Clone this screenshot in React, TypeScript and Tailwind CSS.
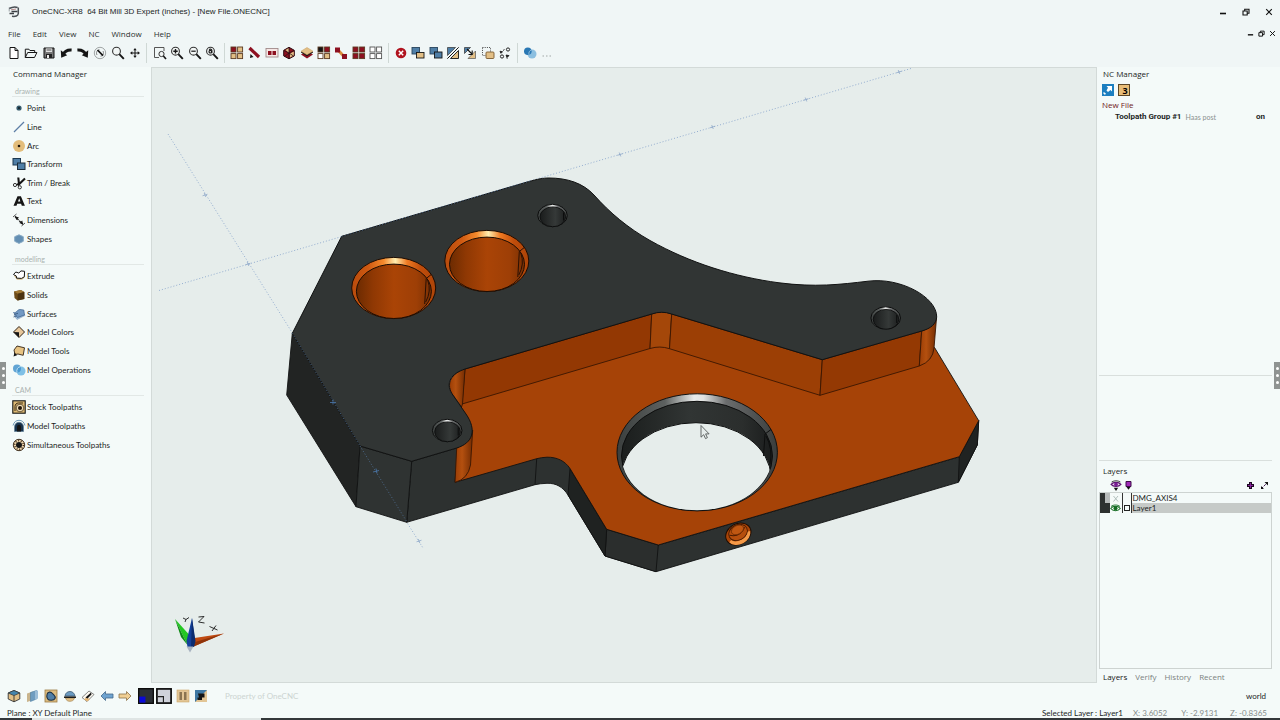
import { useState, type ReactNode } from "react";

const RED = "#8d1020";
const TAN = "#e2bf86";
const BLUE = "#4f7ea6";
const INK = "#151515";

function Icon({ children, size = 14 }: { children: ReactNode; size?: number }) {
  return (
    <svg width={size} height={size} viewBox="0 0 14 14" fill="none" aria-hidden="true" className="block shrink-0">
      {children}
    </svg>
  );
}

function Grid4({ c, stroke = "none" }: { c: string[]; stroke?: string }) {
  const pos = [[1, 1], [7.6, 1], [1, 7.6], [7.6, 7.6]];
  return (
    <>
      {pos.map(([x, y], i) => (
        <rect key={i} x={x} y={y} width="5" height="5" fill={c[i]} stroke={stroke === "none" ? "#5b3b22" : stroke} strokeWidth=".9" />
      ))}
    </>
  );
}

function Lens({ children, cx = 5.5 }: { children?: ReactNode; cx?: number }) {
  return (
    <>
      <circle cx={cx} cy="5.2" r="3.9" fill="#f2f6f5" stroke="#333" strokeWidth="1.1" />
      <path d="M8.3 8.2l4.5 4.6" stroke={INK} strokeWidth="1.9" />
      {children}
    </>
  );
}

type Tool = { name: string; icon: ReactNode };

const fileTools: Tool[] = [
  { name: "New", icon: <path d="M3 1.5h5l3 3v8H3zM8 1.5v3h3" fill="#fff" stroke={INK} strokeWidth="1" /> },
  { name: "Open", icon: <path d="M1.3 11.5V3.2h3.6l1 1.3h4.8v2M1.3 11.5l2.4-5h9.2l-2.4 5z" stroke={INK} strokeWidth="1" /> },
  {
    name: "Save",
    icon: (
      <>
        <path d="M2 2h10v10H2z" fill="#777" stroke={INK} />
        <path d="M4 2.5h6v3.4H4z" fill="#eee" />
        <path d="M4 8h6v4H4z" fill="#222" />
        <path d="M5 9h2v3H5z" fill="#eee" />
        <path d="M4.5 4h5" stroke="#444" />
      </>
    ),
  },
  {
    name: "Undo",
    icon: (
      <>
        <path d="M4 9C5.400 5.600 8 3.800 12.600 4.100" stroke={INK} strokeWidth="3" />
        <path d="M1.800 4.200l.4 7.600 6-2.600z" fill={INK} />
      </>
    ),
  },
  {
    name: "Redo",
    icon: (
      <>
        <path d="M10 9C8.600 5.600 6 3.800 1.400 4.100" stroke={INK} strokeWidth="3" />
        <path d="M12.200 4.200l-.4 7.600-6-2.600z" fill={INK} />
      </>
    ),
  },
  {
    name: "Redraw",
    icon: (
      <>
        <circle cx="7" cy="7" r="5.700" stroke="#8b9090" strokeWidth=".8" />
        <path d="M4 9c-1.200-2.500-.2-4.800 2.500-5.200M10 5c1.200 2.500.2 4.800-2.500 5.200" stroke="#777" strokeWidth=".9" />
        <path d="M4.500 4l5.500 5.600" stroke={INK} strokeWidth="1.700" />
      </>
    ),
  },
  { name: "Zoom", icon: <Lens /> },
  {
    name: "Pan",
    icon: (
      <>
        <path d="M7 4v6M4 7h6" stroke={INK} strokeWidth="1" />
        <path d="M7 2l1.700 2.300H5.300zM7 12l1.700-2.300H5.300zM2 7l2.300-1.700v3.400zM12 7L9.700 5.300v3.400z" fill={INK} />
      </>
    ),
  },
];

const zoomTools: Tool[] = [
  {
    name: "Zoom window",
    icon: (
      <>
        <path d="M6 11.500H1.500v-10h9.500V5" stroke="#444" strokeWidth=".9" />
        <circle cx="8.500" cy="8" r="2.600" fill="#f2f6f5" stroke="#333" />
        <path d="M10.400 10l2.600 3" stroke={INK} strokeWidth="1.600" />
      </>
    ),
  },
  { name: "Zoom in", icon: <Lens><path d="M5.500 3v4.400M3.300 5.200h4.400" stroke={INK} strokeWidth="1.400" /></Lens> },
  { name: "Zoom out", icon: <Lens><path d="M3.300 5.200h4.400" stroke={INK} strokeWidth="1.200" /></Lens> },
  {
    name: "Zoom all",
    icon: (
      <Lens>
        <circle cx="5.300" cy="5.700" r="1.300" stroke={INK} strokeWidth="1.100" />
        <path d="M4 3.400c1.500-.7 2.900-.2 2.900 1.200v2.700" stroke={INK} strokeWidth="1.100" />
      </Lens>
    ),
  },
];

const layerTools: Tool[] = [
  { name: "Select", icon: <Grid4 c={[RED, TAN, TAN, TAN]} /> },
  {
    name: "Select chain",
    icon: (
      <>
        <path d="M2.500 2l9.500 9" stroke={RED} strokeWidth="3.200" />
        <path d="M3 12l.5-4 3 3z" fill={INK} />
      </>
    ),
  },
  {
    name: "Select window",
    icon: (
      <>
        <rect x="1" y="2.500" width="12" height="8.500" fill="#f6e6e4" stroke="#a08a8a" strokeWidth=".9" />
        <rect x="3" y="5" width="3.500" height="4" fill={RED} />
        <rect x="7.500" y="5" width="3.500" height="4" fill={RED} />
      </>
    ),
  },
  {
    name: "Select faces",
    icon: (
      <>
        <path d="M7 1.300l5.300 3v5.600L7 12.800 1.700 9.900V4.300z" fill={RED} stroke="#2c0c10" />
        <path d="M7 2l-3.500 2L7 7z" fill={TAN} />
        <path d="M8 7.500l3.800-2v4L8 11.500z" fill={TAN} />
        <path d="M7 1.500v11M2 4.500l5 2.500M12 4.500L7 7M7 7l-4.500 3.500M7 7l4.500 3" stroke="#221013" strokeWidth=".8" />
      </>
    ),
  },
  {
    name: "Select layer",
    icon: (
      <>
        <path d="M7 5l6 3.500-6 4-6-4z" fill={RED} />
        <path d="M1 6.500l6 3.800 6-3.800v-1H1z" fill={INK} />
        <path d="M7 1.500l6 3.700-6 3.600-6-3.600z" fill={TAN} stroke="#c79a5c" strokeWidth=".5" />
      </>
    ),
  },
  { name: "Select color", icon: <Grid4 c={[INK, RED, "#fff", TAN]} /> },
  {
    name: "Select connected",
    icon: (
      <>
        <path d="M4 4l6 6.500" stroke="#d98b3c" strokeWidth="3" />
        <rect x="1" y="1.500" width="5" height="5" fill={RED} />
        <rect x="8" y="8" width="5" height="5" fill={RED} />
      </>
    ),
  },
  { name: "Select all", icon: <Grid4 c={[RED, RED, RED, RED]} /> },
  { name: "Select none", icon: <Grid4 c={["#fff", "#fff", "#fff", "#fff"]} stroke="#555" /> },
];

const editTools: Tool[] = [
  {
    name: "Delete",
    icon: (
      <>
        <circle cx="7" cy="7" r="5.300" fill="#b0131f" />
        <path d="M4.800 4.800l4.400 4.400M9.200 4.800L4.800 9.200" stroke="#fff" strokeWidth="1.500" />
      </>
    ),
  },
  {
    name: "Move",
    icon: (
      <>
        <rect x="1" y="1.500" width="7.500" height="6.500" fill={BLUE} stroke="#28445c" strokeWidth=".9" />
        <rect x="5.500" y="6.500" width="7.500" height="5.500" fill={TAN} stroke={INK} strokeWidth=".9" />
      </>
    ),
  },
  {
    name: "Copy",
    icon: (
      <>
        <rect x="1" y="1.500" width="7.500" height="6.500" fill={BLUE} stroke="#28445c" strokeWidth=".9" />
        <rect x="5.500" y="6" width="7.500" height="6" fill={BLUE} stroke={INK} strokeWidth=".9" />
      </>
    ),
  },
  {
    name: "Mirror",
    icon: (
      <>
        <path d="M1.500 1.500h8l-8 8z" fill={BLUE} stroke="#333" strokeWidth=".7" />
        <path d="M12.500 4.500v8h-8z" fill={TAN} stroke={INK} strokeWidth=".9" />
        <path d="M12.700 1.300L1.300 12.700" stroke="#f4f8f7" strokeWidth="2.400" />
        <path d="M12.700 1.300L1.300 12.700" stroke={INK} strokeWidth="1" />
      </>
    ),
  },
  {
    name: "Rotate",
    icon: (
      <>
        <path d="M1.500 1.500h6l-6 6z" fill={BLUE} stroke="#333" strokeWidth=".7" />
        <path d="M12.500 5v7.500H5z" fill={TAN} stroke="#555" strokeWidth=".7" />
        <path d="M4 3l5 5M5.500 8.500h3.700V4.500" stroke={INK} strokeWidth="1.100" />
      </>
    ),
  },
  {
    name: "Scale",
    icon: (
      <>
        <path d="M1.500 1.500h8v8h-8z" stroke="#333" strokeWidth=".9" strokeDasharray="1 1.200" />
        <rect x="5" y="6" width="8" height="6.500" rx="1" fill={TAN} stroke="#7a5a30" strokeWidth=".9" />
      </>
    ),
  },
  {
    name: "Array",
    icon: (
      <>
        <circle cx="10" cy="3.500" r="1.600" stroke="#222" />
        <circle cx="4" cy="10.500" r="1.600" stroke="#222" />
        <path d="M2 5.200l2.600.6-1.800 1.500zM8 9l3 .6-2 2z" fill={INK} stroke={INK} strokeWidth=".8" />
        <path d="M5 4.500l1.500-1M8.500 12l1 .5" stroke="#333" />
      </>
    ),
  },
];

const modelTools: Tool[] = [
  {
    name: "Boolean",
    icon: (
      <>
        <circle cx="9" cy="8" r="4.500" fill="#8cbfe0" />
        <circle cx="4.800" cy="5.200" r="3.800" fill="#2a78b4" />
        <path d="M6 8.800a4.400 4.400 0 012.600-5" stroke="#cfe6f4" strokeWidth=".6" />
      </>
    ),
  },
  {
    name: "More",
    icon: <path d="M2.500 10h1.500M6 10h1.500M9.500 10H11" stroke="#a0a6a5" strokeWidth="1.200" />,
  },
];

const drawing: Tool[] = [
  {
    name: "Point",
    icon: (
      <>
        <circle cx="7" cy="7" r="2.600" fill="#34596b" />
        <circle cx="7" cy="7" r="1" fill="#101c22" />
      </>
    ),
  },
  { name: "Line", icon: <path d="M2 12L12 2" stroke="#5d7ea6" strokeWidth="1.300" /> },
  {
    name: "Arc",
    icon: (
      <>
        <circle cx="7" cy="7" r="6" fill="#e3bd7b" />
        <circle cx="7" cy="7" r="1.300" fill="#1b130a" />
      </>
    ),
  },
  {
    name: "Transform",
    icon: (
      <>
        <rect x="1" y="1.500" width="7.500" height="6.500" fill={BLUE} stroke="#1c3850" />
        <rect x="5.500" y="6" width="7.500" height="6.500" fill={BLUE} stroke="#1c2c3a" />
      </>
    ),
  },
  {
    name: "Trim / Break",
    icon: (
      <>
        <path d="M6.300 1.500l.7 6.800L13 2.500" stroke={INK} strokeWidth="2.100" />
        <path d="M7 7.500L4.500 9" stroke={INK} strokeWidth="1.500" />
        <circle cx="3" cy="9" r="1.600" stroke="#333" />
        <circle cx="7.800" cy="11.300" r="1.600" stroke="#333" />
      </>
    ),
  },
  { name: "Text", icon: <path d="M1.500 11.800L5.500 2.200h3.400l4 9.600H9.800l-.7-2H5.200l-.7 2zM6 7.600h2.400L7.200 4.300z" fill={INK} fillRule="evenodd" /> },
  {
    name: "Dimensions",
    icon: (
      <>
        <path d="M1 4l3.500-3M9.500 13l3.500-3" stroke="#444" strokeWidth=".9" />
        <path d="M3 3.500l8 8" stroke={INK} strokeDasharray="2 1" strokeWidth="1.200" />
        <path d="M3 3.300l4 1.200-2.700 2.500zM11.200 11.500l-1-4L7.300 10z" fill={INK} />
      </>
    ),
  },
  { name: "Shapes", icon: <path d="M7 2.800l4.300 1.900v4.600L7 11.400 2.700 9.300V4.700z" fill="#638fb3" stroke="#86a9c4" /> },
];

const modelling: Tool[] = [
  {
    name: "Extrude",
    icon: (
      <>
        <path d="M2 6.800l2.500-2.700 2.700 1L9.500 3l3 .3v5.500l-2.500 2H5z" fill="#d8c08a" />
        <path d="M1.500 5.500L3.800 3l3 1L9 1.900l3.600.4-.3 5.500-2.800 1.600-5-.3L4.300 7z" fill="#fff" stroke={INK} strokeWidth="1" />
      </>
    ),
  },
  {
    name: "Solids",
    icon: (
      <>
        <path d="M2 3.500L8.800 2 12.300 4v7L5.500 12.500 2.500 10z" fill="#6d4b18" />
        <path d="M2 3.500L8.800 2 12.300 4 5.800 5.800z" fill="#a07834" />
        <path d="M5.800 5.800L12.300 4v7l-6.800 1.500z" fill="#4a3210" />
      </>
    ),
  },
  {
    name: "Surfaces",
    icon: (
      <>
        <path d="M2 8.500l8.500-3 2.500 3-8 4z" fill="#9fbddb" stroke="#7592b4" strokeWidth=".5" />
        <path d="M1.500 5.500c3 1 3.500-3 6.500-3l3.800.5.700 5-7 2.500z" fill="#7299c4" stroke="#3d628c" strokeWidth=".7" />
        <path d="M1.500 10l3-1M2 7.500l4-1.200" stroke="#335378" strokeWidth=".8" />
      </>
    ),
  },
  {
    name: "Model Colors",
    icon: (
      <>
        <path d="M7 1.500L12.500 7 7 12.500 1.500 7z" fill="#e7c79b" stroke="#332415" />
        <path d="M1.500 7L7 7.200v5.300z" fill={INK} />
      </>
    ),
  },
  {
    name: "Model Tools",
    icon: (
      <>
        <path d="M5 2l7.500 1.800-1.300 7.500L6 10l-3 .5L2 6z" fill="#e7c383" stroke="#332415" strokeWidth=".9" />
        <path d="M1.500 12.500l1-4 2.500 2.700z" fill={INK} />
      </>
    ),
  },
  {
    name: "Model Operations",
    icon: (
      <>
        <circle cx="9" cy="8" r="4.500" fill="#7fc0e6" />
        <circle cx="5" cy="5.500" r="4" fill="#3c8fca" fillOpacity=".8" />
        <path d="M5 9.300a4.300 4.300 0 013.700-5.700" stroke="#d8eefa" strokeWidth=".8" />
      </>
    ),
  },
];

const cam: Tool[] = [
  {
    name: "Stock Toolpaths",
    icon: (
      <>
        <rect x=".8" y=".8" width="12.400" height="12.400" fill="#dcb873" stroke={INK} strokeWidth="1.100" />
        <path d="M3 11V6.500C3 4.500 4.500 3 6.500 3H11" stroke="#3a2a14" />
        <circle cx="8" cy="8" r="3.800" fill="#f0dcb4" stroke="#3a2a14" strokeWidth=".7" />
        <circle cx="8" cy="8" r="2" fill="#201308" />
      </>
    ),
  },
  {
    name: "Model Toolpaths",
    icon: (
      <>
        <path d="M1 6.500C2 3 4 1.300 7 1.300S12 3 13 6.500" stroke="#6f9ab8" />
        <path d="M2.500 12.500V8C2.500 5 4.500 3.300 7 3.300S11.500 5 11.500 8v4.500z" fill="#17324d" stroke="#5f8097" strokeWidth=".7" />
        <path d="M5 12.500V8c0-3 4-3 4 0v4.500z" fill={INK} />
      </>
    ),
  },
  {
    name: "Simultaneous Toolpaths",
    icon: (
      <>
        <circle cx="7" cy="7" r="5.700" fill="#ecd6ae" stroke="#2c1c0c" strokeWidth=".9" />
        <circle cx="7" cy="7" r="4.300" stroke="#4a321a" strokeDasharray="1 1.700" strokeWidth="1.600" />
        <circle cx="7" cy="7" r="3" fill={INK} />
      </>
    ),
  },
];

const viewTools: Tool[] = [
  {
    name: "Isometric",
    icon: (
      <>
        <path d="M7 1.500L12.800 4v6L7 12.800 1.200 10V4z" fill={TAN} stroke="#333" strokeWidth=".9" />
        <path d="M7 1.500L12.800 4 7 6.600 1.200 4z" fill="#4685ad" stroke="#333" strokeWidth=".7" />
        <path d="M7 6.600v6.200" stroke="#333" strokeWidth=".9" />
      </>
    ),
  },
  {
    name: "Front view",
    icon: (
      <>
        <path d="M1 4.500l6-2V11l-6 2z" fill="#c9b48d" />
        <path d="M4.500 3.500l6-2v8.500l-6 2.500z" fill="#6f9dc0" stroke="#4e7ea3" strokeWidth=".6" />
        <path d="M9 2v9l3-1.500V1.500z" fill="#9bbdd7" />
      </>
    ),
  },
  {
    name: "Shaded",
    icon: (
      <>
        <rect x="1" y="1" width="12" height="12" fill="#dcbc80" stroke="#9d7c46" strokeWidth=".8" />
        <path d="M3 5.500C3.800 2.500 7 2.500 8.500 4.500S12 7 11 9.500s-6.500 2-7.300.5S2.500 7 3 5.500z" fill={BLUE} stroke="#1f3244" strokeWidth="1.100" />
      </>
    ),
  },
  {
    name: "Section",
    icon: (
      <>
        <path d="M2.500 9h9c-.5 2.300-2.500 3.300-4.500 3.300S3 11.500 2.500 9z" fill={TAN} stroke="#a58653" strokeWidth=".7" />
        <path d="M2 7c.3-3 2.500-4.500 5-4.500S11.500 4.300 12 7z" fill="#6c9bc2" stroke="#3c5a74" strokeWidth=".8" />
        <path d="M1 8.200h12" stroke={INK} strokeWidth="1.500" />
      </>
    ),
  },
  {
    name: "Edges",
    icon: (
      <>
        <path d="M1 8.500l7-6.500 5 3.500-7 7z" fill="#fbf8f0" stroke="#555" strokeWidth=".7" />
        <path d="M3 10.500l2-2 4 1.500-2.500 2.500z" fill="#e3b677" />
        <path d="M4.500 8.500l5.500-5 .5 2-4 4z" fill={INK} />
      </>
    ),
  },
  { name: "Previous view", icon: <path d="M1 7l4.500-4.500V5h7.500v4H5.500v2.500z" fill="#6ea3d0" stroke="#44688a" strokeWidth=".8" /> },
  { name: "Next view", icon: <path d="M13 7L8.500 2.500V5H1v4h7.500v2.500z" fill="#f0cf94" stroke="#8b714a" strokeWidth=".8" /> },
];

const planeTools: Tool[] = [
  {
    name: "Dark plane",
    icon: (
      <>
        <rect x=".6" y=".6" width="12.800" height="12.800" fill="#2c3036" stroke="#0c0c0c" strokeWidth="1.200" />
        <rect x="1.200" y="7.500" width="5.300" height="5.300" fill="#0a08d8" />
      </>
    ),
  },
  {
    name: "Light plane",
    icon: (
      <>
        <rect x=".8" y=".8" width="12.400" height="12.400" fill="#cfd2da" stroke="#0c0c0c" strokeWidth="1.500" />
        <path d="M1.500 7.500h5v5.500" stroke="#222" />
      </>
    ),
  },
];

const panelTools: Tool[] = [
  {
    name: "Panels",
    icon: (
      <>
        <rect x="1" y="1" width="12" height="12" fill="#e2c595" stroke="#cda769" strokeWidth=".6" />
        <rect x="3.500" y="3" width="2.500" height="8" fill="#8a7451" />
        <rect x="8" y="3" width="2.500" height="8" fill="#8a7451" />
      </>
    ),
  },
  {
    name: "Swap",
    icon: (
      <>
        <rect x="1" y="1" width="12" height="12" fill="#e2c595" />
        <path d="M1 1h12L1 13z" fill="#3e78a4" />
        <path d="M4 4.500h6.500v4H8V11H3.500V8.500H5z" fill={INK} />
      </>
    ),
  },
];

function ToolGroup({ tools, className, size = 14 }: { tools: Tool[]; className: string; size?: number }) {
  return (
    <div className={"flex items-center justify-between " + className}>
      {tools.map((t) => (
        <button key={t.name} type="button" aria-label={t.name} className="hover:bg-sky-100">
          <Icon size={size}>{t.icon}</Icon>
        </button>
      ))}
    </div>
  );
}

function CommandList({ title, tools, className }: { title: string; tools: Tool[]; className: string }) {
  return (
    <section>
      <h3 className="mb-[2px] ml-3 mr-[7px] flex h-[17px] items-center border-b border-[#e2e8e6] pl-[3px] pt-[6px] text-[7px] leading-[8px] text-[#aab2b0]">
        {title}
      </h3>
      <ul className={"ml-3 flex flex-col justify-between " + className}>
        {tools.map((t) => (
          <li key={t.name} className="flex flex-1 items-center">
            <button type="button" className="flex items-center gap-[1px] leading-[12px] text-[#1c1f1e]">
              <Icon>{t.icon}</Icon>
              {t.name}
            </button>
          </li>
        ))}
      </ul>
    </section>
  );
}

function Handle({ side }: { side: "left" | "right" }) {
  return (
    <button
      type="button"
      aria-label={side === "left" ? "Collapse commands" : "Collapse manager"}
      className={
        "absolute top-[295px] flex h-[27px] w-[6px] flex-col items-center justify-center gap-1 bg-[#8f9392] " +
        (side === "left" ? "left-0" : "right-0")
      }
    >
      <span className="size-[3px] rounded-full bg-white" />
      <span className="size-[3px] rounded-full bg-white" />
      <span className="size-[3px] rounded-full bg-white" />
    </button>
  );
}

function Tick({ x, y }: { x: number; y: number }) {
  return <path d={`M${x - 2.5} ${y + 0.8}l5-1.600M${x - 0.8} ${y - 2}l1.600 4`} stroke="#86a2c6" strokeWidth=".7" />;
}

function SmallBore({ x, y }: { x: number; y: number }) {
  return (
    <g>
      <ellipse cx={x} cy={y} rx="14.800" ry="11.200" fill="url(#steelRim)" stroke="#0c0d0d" strokeWidth="1" />
      <ellipse cx={x + 0.3} cy={y + 1.3} rx="12.800" ry="9.900" fill="url(#darkBore)" stroke="#0c0d0d" strokeWidth=".9" />
      <path d={`M${x + 11} ${y - 3}v8`} stroke="#0c0d0d" strokeWidth="1" />
    </g>
  );
}

function OrangeBore({ x, y }: { x: number; y: number }) {
  return (
    <g>
      <ellipse cx={x} cy={y} rx="42" ry="30.600" fill="url(#orangeRim)" stroke="#1d0c02" strokeWidth="1" />
      <ellipse cx={x + 0.2} cy={y + 3.3} rx="37.500" ry="27.200" fill="url(#orangeBore)" stroke="#1d0c02" strokeWidth="1" />
      <path d={`M${x + 32.5} ${y - 9.5}l-1.500 25.500M${x + 32.5} ${y - 9.5}l5-4M${x + 34} ${y - 8}q4 11-2 22`} stroke="#2a1003" strokeWidth="1" fill="none" />
    </g>
  );
}

function Viewport() {
  return (
    <svg viewBox="152 68 944 614" className="block h-full w-full" role="img" aria-label="Machined plate model">
      <defs>
        <linearGradient id="orangeRim">
          <stop offset="0" stopColor="#b84b0c" />
          <stop offset=".2" stopColor="#cf5a12" />
          <stop offset=".38" stopColor="#f58a2c" />
          <stop offset=".52" stopColor="#ffeeb0" />
          <stop offset=".66" stopColor="#ef7a22" />
          <stop offset=".82" stopColor="#c04d0b" />
          <stop offset="1" stopColor="#ad4408" />
        </linearGradient>
        <linearGradient id="orangeBore">
          <stop offset="0" stopColor="#6c2b01" />
          <stop offset=".22" stopColor="#8f3803" />
          <stop offset=".5" stopColor="#aa4406" />
          <stop offset=".8" stopColor="#9e3f06" />
          <stop offset="1" stopColor="#7a3003" />
        </linearGradient>
        <linearGradient id="steelRim">
          <stop offset="0" stopColor="#3b3f3e" />
          <stop offset=".3" stopColor="#5d6160" />
          <stop offset=".48" stopColor="#e8eae9" />
          <stop offset=".54" stopColor="#e0e2e1" />
          <stop offset=".68" stopColor="#6b6d6e" />
          <stop offset="1" stopColor="#3a3d3c" />
        </linearGradient>
        <linearGradient id="darkBore">
          <stop offset="0" stopColor="#1a1c1c" />
          <stop offset=".6" stopColor="#353938" />
          <stop offset="1" stopColor="#1d1f1f" />
        </linearGradient>
        <linearGradient id="bigWall">
          <stop offset="0" stopColor="#1b1e1d" />
          <stop offset=".45" stopColor="#313534" />
          <stop offset=".8" stopColor="#2b2e2d" />
          <stop offset="1" stopColor="#1b1d1d" />
        </linearGradient>
        <linearGradient id="orangeFillet">
          <stop offset="0" stopColor="#9b3d05" />
          <stop offset=".4" stopColor="#b4500f" />
          <stop offset="1" stopColor="#732c02" />
        </linearGradient>
        <clipPath id="bigInner">
          <ellipse cx="697" cy="456" rx="75.300" ry="54.300" />
        </clipPath>
      </defs>

      <g stroke="#8aa6cc" strokeWidth=".9" strokeDasharray="1 2">
        <path d="M159 290.500L911 68.500" />
        <path d="M168 134L293 334" />
        <path d="M406 521L423 548" />
      </g>
      {[[205, 195], [248, 264], [620, 154.5], [712.5, 127], [806, 99.5], [899, 72], [419, 541]].map(([x, y]) => (
        <Tick key={x} x={x} y={y} />
      ))}

      <g stroke="#111212" strokeWidth=".9" strokeLinejoin="round">
        <path
          d="M411.700 461.300L456.700 448 472 430 620 440 606.700 529.300 658.300 545 959.300 456.700 978.700 420.700 977.300 445 958.300 482.300 656 571.700 605 556 568 495C563 487 556 483 547 483.300Q540 483.500 535 484.700L406.700 522.300z"
          fill="#2d3130"
        />
        <path d="M959.300 456.700L978.700 420.700 977.300 445 958.300 482.300z" fill="#202322" />
        <path d="M606.700 529.300L658.300 545 656 571.700 605 556z" fill="#2b2e2d" />
        <path d="M570 468.500L606.700 529.300 605 556 568 495z" fill="#1f2221" />
        <path
          d="M461 404L465 369 661 312 822 350 934.500 347.500 978.700 420.700 959.300 456.700 658.300 545 606.700 529.300 570 468.500C565 461 557 457 547 457.200Q541 457.500 536.700 458.700L455 482.300z"
          fill="#a64307"
        />
        <path d="M536.700 458.700L535 484.700" />
        <path d="M292.300 333.300L360 446 356 506.700 286.700 395z" fill="#222423" />
        <path d="M360 446L411.700 461.300 406.700 522.300 356 506.700z" fill="#2f3332" />
      </g>

      <g stroke="#3a1602" strokeWidth=".9" strokeLinejoin="round">
        <path d="M465 369L651.700 314 650 348.500 462 404z" fill="#933803" />
        <path d="M465 369C452 373 446 383 451.700 393.300L461.500 407 462.500 404z" fill="url(#orangeFillet)" />
        <path d="M651.700 314Q661.700 310 671.700 314L669.500 348.700Q660 345.500 650 348.500z" fill="#a44709" />
        <path d="M671.700 314L822.300 359.700 820 395.300 669.500 348.700z" fill="#9c3f05" />
        <path d="M822.300 359.700L921.700 331 919.300 366 820 395.300z" fill="#943903" />
        <path d="M921.700 331Q932 328 936.500 318L934 348Q933 361 919.300 366z" fill="url(#orangeFillet)" />
        <path d="M456.700 448Q469 443 472.700 430L470.500 465Q468 479 455 482.300z" fill="url(#orangeFillet)" />
      </g>

      <path
        d="M341.700 236.300L528.300 181.700C538 179 543 178 549 178C567 178 583 183 594 195C610 213 628 228 650 240.500C690 263 735 277 779 282.800C815 287.500 840 284.500 868 281.200C900 277 937 297 936.700 317C936 324 931 328.500 921.700 331L822.300 359.700 671.700 314Q661.700 310.500 651.700 314L465 369C451 373.500 445.500 383 451.700 393.300L466 414C477 430 473 443 456.700 448L411.700 461.300 360 446 292.300 333.300z"
        fill="#313534"
        stroke="#111212"
        strokeWidth="1"
      />
      <g stroke="#52739c" strokeWidth=".8" strokeDasharray="1 2">
        <path d="M292.300 333.300L360 446" />
        <path d="M360 446L407 522" />
        <path d="M341.700 236.300L530 181" />
      </g>
      <path d="M330 402.500h6M333 399.500v5M373 472l6-1.500M376 468.500l1 5" stroke="#4b78ad" strokeWidth=".8" />

      <OrangeBore x={393.7} y={288} />
      <OrangeBore x={486.8} y={261} />
      <SmallBore x={552.5} y={215.5} />
      <SmallBore x={447.2} y={430.5} />
      <SmallBore x={885.7} y={318} />

      <ellipse cx="697.200" cy="452.300" rx="80.200" ry="58.500" fill="url(#steelRim)" stroke="#111212" strokeWidth="1" />
      <ellipse cx="697" cy="456" rx="75.500" ry="54.700" fill="url(#bigWall)" stroke="#0d0e0e" strokeWidth="1" />
      <ellipse cx="696" cy="477.500" rx="75" ry="54.800" fill="#e6edeb" stroke="#0d0e0e" strokeWidth="1" clipPath="url(#bigInner)" />
      <path d="M765 434l-1.500 22M765 434l6-4.500M766 436q7 13 4 28" stroke="#0d0e0e" strokeWidth="1" fill="none" />

      <g transform="rotate(-28 738.300 534)">
        <ellipse cx="738.300" cy="534" rx="13.200" ry="10.300" fill="#a84407" stroke="#1d0c02" />
        <path d="M726.500 537a12 9 0 0023.600 0l-3-1a9.500 6.500 0 01-18 0z" fill="#f59a48" />
        <ellipse cx="738.800" cy="532.500" rx="9.800" ry="7.600" fill="#b64e0d" stroke="#4a1b02" strokeWidth=".9" />
        <path d="M730 531q8 7 17 0" stroke="#4a1b02" fill="none" />
        <ellipse cx="739.500" cy="530" rx="6.500" ry="4.300" fill="#c05712" stroke="#6a2903" strokeWidth=".7" />
      </g>

      <path d="M701 425.500v11.700l2.700-2.500 1.800 3.900 1.900-.9-1.800-3.800h3.500z" fill="#e6edeb" stroke="#555a59" strokeWidth=".9" />

      <path d="M175 619L188.500 634 187.500 645z" fill="#23c822" />
      <path d="M175 619L181 637 187.500 645z" fill="#0d8a15" />
      <path d="M224 633.500L194.500 638 192.500 647z" fill="#c04a12" />
      <path d="M224 633.500L195 642 192.500 647z" fill="#8f340a" />
      <path d="M192 618L195 641 192.500 647H187.500L186.500 641z" fill="#14409a" />
      <path d="M192 618L191 647H194L195.500 641z" fill="#0c2c70" />
      <path d="M186.500 646.500h7l-3.500 6z" fill="#a9b4c2" />
      <g fill="none" stroke="#1a1a1a" strokeWidth=".9">
        <path d="M183 618l3 1.500 3-2M186 619.500l-1 2.500" />
        <path d="M198.500 617l5.500-.5-5.500 5.500 6 1" />
        <path d="M209.500 626.500l8 3.500M216 625.500l-4 5.500" />
      </g>
    </svg>
  );
}

function WindowButtons({ className, size }: { className: string; size: number }) {
  return (
    <div className={"flex items-center " + className}>
      <button type="button" aria-label="Minimize">
        <svg width={size} height={size} viewBox="0 0 8 8" className="block"><path d="M1 5.500h6" stroke="#111" strokeWidth="1.600" /></svg>
      </button>
      <button type="button" aria-label="Restore">
        <svg width={size} height={size} viewBox="0 0 8 8" fill="none" className="block"><path d="M1 3h4.200v4H1zM2.700 3V1.300H7v4H5.200" stroke="#111" strokeWidth="1.100" /></svg>
      </button>
      <button type="button" aria-label="Close">
        <svg width={size} height={size} viewBox="0 0 8 8" className="block"><path d="M1.200 1.200l5.600 5.600M6.800 1.200L1.200 6.800" stroke="#111" strokeWidth="1.100" /></svg>
      </button>
    </div>
  );
}

function Eye({ color }: { color: string }) {
  return (
    <svg width="11" height="9" viewBox="0 0 11 9" fill="none" className="block">
      <path d="M.8 4.500C3 1.500 8 1.500 10.200 4.500 8 7.500 3 7.500.8 4.500z" fill="#fff" stroke={color} strokeWidth="1.100" />
      <circle cx="5.500" cy="4.300" r="2" fill={color} />
      <path d="M1 2.500C3.500.5 7.500.5 10 2.500" stroke={color} strokeWidth=".9" />
    </svg>
  );
}

function LayersPanel() {
  const [selected, setSelected] = useState("Layer1");
  const layers = [
    { name: "DMG_AXIS4", shown: false },
    { name: "Layer1", shown: true },
  ];
  return (
    <section className="mr-2 flex min-h-0 flex-[222_1_0%] flex-col border-t border-[#d9dfdd]">
      <h2 className="mt-1 pl-1 leading-[11px]">Layers</h2>
      <div className="flex h-4 items-center gap-[3px] pl-[11px] pr-[3px] pt-[2px]">
        <button type="button" aria-label="Show all layers">
          <svg width="12" height="11" viewBox="0 0 11 10" fill="none" className="block">
            <path d="M1 4C3 1.500 8 1.500 10 4 8 6.500 3 6.500 1 4z" fill="#e8d6ee" stroke="#5d1470" strokeWidth="1.100" />
            <circle cx="5.500" cy="3.900" r="1.700" fill="#7a1c96" />
            <path d="M1.500 1.800C4 .3 7 .3 9.500 1.800" stroke="#222" strokeWidth=".8" />
            <path d="M3.500 7h4l-2 3z" fill="#111" />
          </svg>
        </button>
        <button type="button" aria-label="Lock layers">
          <svg width="7" height="10" viewBox="0 0 7 10" className="block">
            <path d="M1 1.500h5v5H1z" fill="#a02ab8" stroke="#3c0d48" />
            <path d="M1.500 7h4l-2 2.700z" fill="#111" />
          </svg>
        </button>
        <span className="flex-1" />
        <button type="button" aria-label="Add layer" className="mr-[2px]">
          <svg width="9" height="9" viewBox="0 0 9 9" className="block">
            <path d="M3 1h3v2h2v3H6v2H3V6H1V3h2z" fill="#1d0a22" />
            <path d="M4.500 2v5M2 4.500h5" stroke="#8e24a6" strokeWidth=".9" />
          </svg>
        </button>
        <button type="button" aria-label="Expand layers">
          <svg width="9" height="9" viewBox="0 0 9 9" className="block">
            <path d="M1.500 7.500l6-6" stroke="#4a1456" strokeWidth="1" strokeDasharray="2.500 1" />
            <path d="M4.500 1H8v3.500zM1 5v3h3z" fill="#111" />
          </svg>
        </button>
      </div>
      <div className="mb-[1px] min-h-0 flex-1 border border-[#cdd3d1]">
        <table className="w-full border-collapse">
          <tbody>
            {layers.map((l) => (
              <tr
                key={l.name}
                onClick={() => setSelected(l.name)}
                className={"h-[10px] " + (l.name === selected ? "bg-[#c6cac8]" : "")}
              >
                <td className="w-[5px] bg-[#2d3130] p-0" />
                <td className={"w-[5px] p-0 " + (l.shown ? "bg-[#2d3130]" : "bg-[#b6baba]")} />
                <td className="w-3 border-r border-[#333] bg-[#f5faf9] p-0">
                  {l.shown ? (
                    <Eye color="#136b22" />
                  ) : (
                    <svg width="11" height="9" viewBox="0 0 11 9" className="block"><path d="M3.500 2l4.500 5.500M8 2L3.500 7.500" stroke="#a9b9b5" strokeWidth=".9" /></svg>
                  )}
                </td>
                <td className="w-[9px] border-r border-[#333] bg-[#f5faf9] p-0">
                  {l.shown && <span className="mx-auto block size-[6px] border border-[#222]" />}
                </td>
                <td className="p-0 pl-[1px] font-['Lato','Open_Sans',sans-serif] leading-[10px]">
                  <button type="button" className="block leading-[10px]">{l.name}</button>
                </td>
              </tr>
            ))}
          </tbody>
        </table>
      </div>
      <nav className="flex h-[13px] items-center gap-2 pl-1 text-[#7b8280]">
        {["Layers", "Verify", "History", "Recent"].map((t, i) => (
          <button key={t} type="button" className={i === 0 ? "text-[#141616]" : ""}>{t}</button>
        ))}
      </nav>
    </section>
  );
}

export default function App() {
  return (
    <div className="flex h-screen flex-col overflow-hidden bg-[#f4faf9] font-['Open_Sans','Noto_Sans',sans-serif] text-[8px] text-[#1c1f1e]">
      <header className="bg-[#f0f6f6]">
        <div className="flex h-6 items-center pl-2 pr-[7px]">
          <svg width="12" height="12" viewBox="0 0 12 12" fill="none" aria-hidden="true">
            <path d="M1 2.500C4 1 8 .8 9.500 1.500M10.300 1.500v6C10 10 7.500 10.800 4 10.300" stroke="#4a4f55" strokeWidth="1.500" />
            <path d="M3.500 5.500h6M1.500 7.500h4.500" stroke="#3b3f44" strokeWidth="1.500" />
            <path d="M1.200 2.500v3" stroke="#9aa0a4" />
            <path d="M3 3.800l5-.8" stroke="#b58a8a" />
          </svg>
          <h1 className="ml-3 whitespace-pre font-['Liberation_Sans',sans-serif]">OneCNC-XR8  64 Bit Mill 3D Expert (inches) - [New File.ONECNC]</h1>
          <WindowButtons className="ml-auto gap-[15px]" size={8} />
        </div>
        <div className="flex h-[19px] items-center pl-2 pr-1">
          <nav className="flex items-center gap-3 text-[#2c3130]">
            {["File", "Edit", "View", "NC", "Window", "Help"].map((m) => (
              <button key={m} type="button">{m}</button>
            ))}
          </nav>
          <WindowButtons className="ml-auto gap-1" size={7} />
        </div>
        <div className="flex h-6 items-center pb-1 pl-[7px]">
          <ToolGroup tools={fileTools} className="w-[135px]" />
          <span className="ml-1 mr-[6px] h-5 w-px bg-[#cfd8d5]" />
          <ToolGroup tools={zoomTools} className="w-[66px]" />
          <span className="mx-[5px] h-5 w-px bg-[#cfd8d5]" />
          <ToolGroup tools={layerTools} className="w-[153px]" />
          <span className="mx-[5px] h-5 w-px bg-[#cfd8d5]" />
          <ToolGroup tools={editTools} className="w-[118px]" />
          <span className="mx-[5px] h-5 w-px bg-[#cfd8d5]" />
          <ToolGroup tools={modelTools} className="w-[31px]" />
        </div>
      </header>

      <main className="relative flex min-h-0 flex-1">
        <aside className="w-[151px] shrink-0">
          <h2 className="flex h-[13px] items-center pl-[13px] leading-[12px]">Command Manager</h2>
          <div className="font-['Lato','Liberation_Sans',sans-serif]">
            <CommandList title="drawing" tools={drawing} className="h-[149px]" />
            <CommandList title="modelling" tools={modelling} className="h-28" />
            <CommandList title="CAM" tools={cam} className="h-14" />
          </div>
        </aside>
        <div className="min-w-0 flex-1 border border-[#d3dad8] bg-[#e6edeb]">
          <Viewport />
        </div>
        <aside className="flex w-[183px] shrink-0 flex-col pl-[2px]">
          <section className="mr-2 min-h-0 flex-[308_1_0%] border-b border-[#d9dfdd]">
            <h2 className="flex h-[13px] items-center pl-1 leading-[12px]">NC Manager</h2>
            <div className="mt-[3px] flex gap-[3px] pl-[2px]">
              <button type="button" aria-label="Expand manager">
                <Icon>
                  <rect x="1" y="1" width="12" height="12" fill="#1d7fc0" />
                  <path d="M5.500 3H11v5.500L9.500 7 7 9 5.500 7.500 7 4.800z" fill="#fff" />
                  <path d="M3 9.500l1.500 1.500H3z" fill="#fff" stroke="#fff" />
                </Icon>
              </button>
              <button type="button" aria-label="Version 3" className="mt-[1px] grid size-3 place-items-center border border-[#5c4626] bg-[#e8bd78] pl-[2px] pt-[2px] text-[9px] font-bold leading-[8px] text-black">
                3
              </button>
            </div>
            <p className="mt-[2px] pl-[3px] leading-[12px] text-[#6f1822]">New File</p>
            <div className="flex items-center pl-4 pr-[7px] leading-[12px]">
              <span className="font-['Roboto','Open_Sans',sans-serif] font-bold">Toolpath Group #1</span>
              <span className="ml-1 font-['Lato','Liberation_Sans',sans-serif] text-[7px] text-[#8a908e]">Haas post</span>
              <span className="ml-auto font-['Roboto','Open_Sans',sans-serif] font-bold">on</span>
            </div>
          </section>
          <div className="min-h-0 flex-[85_1_0%]" />
          <LayersPanel />
        </aside>
        <Handle side="left" />
        <Handle side="right" />
      </main>

      <footer className="font-['Lato','Liberation_Sans',sans-serif]">
        <div className="flex h-6 items-center pl-[7px] pr-[14px] pt-[2px]">
          <ToolGroup tools={viewTools} className="w-[125px]" />
          <ToolGroup tools={planeTools} className="ml-[6px] w-[34px]" size={16} />
          <ToolGroup tools={panelTools} className="ml-1 w-8" />
          <span className="ml-[17px] text-[#ccd4d1]">Property of OneCNC</span>
          <span className="ml-auto">world</span>
        </div>
        <div className="flex h-[11px] items-center pl-[7px] pr-[13px] leading-[10px]">
          <span>Plane : XY Default Plane</span>
          <span className="ml-auto">Selected Layer : Layer1</span>
          <span className="ml-[10px] text-[#858c8a]">X: 3.6052</span>
          <span className="ml-[14px] text-[#858c8a]">Y: -2.9131</span>
          <span className="ml-3 text-[#858c8a]">Z: -0.8365</span>
        </div>
        <div className="flex h-[2px] bg-[#33383a]">
          <span className="ml-8 h-full w-[229px] bg-[#dfe5e4]" />
        </div>
      </footer>
    </div>
  );
}
